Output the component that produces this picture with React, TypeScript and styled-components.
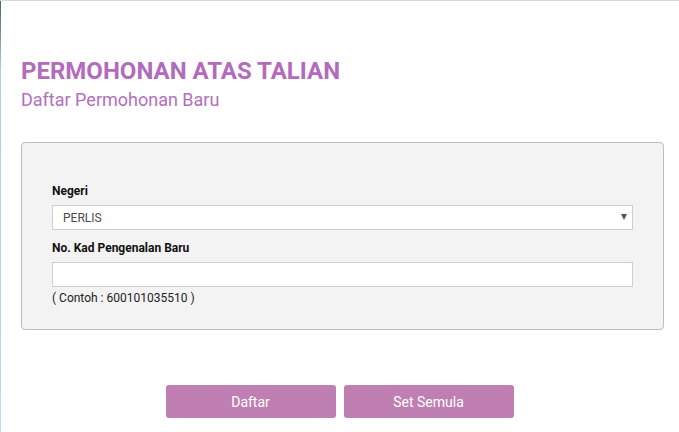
import styled, { createGlobalStyle } from 'styled-components';

const GlobalStyle = createGlobalStyle`
  html, body {
    margin: 0;
    padding: 0;
    background: #fff;
  }
  body {
    font-family: Roboto, 'Liberation Sans', sans-serif;
  }
`;

// the thin desktop strip on the left and the window line on top
const Page = styled.div`
  box-sizing: border-box;
  width: 679px;
  height: 432px;
  border-top: 1px solid #d6d6dc;
  background:
    linear-gradient(to bottom, #55606a 0, #7a8a98 30px, #a9d0f2 70px, #b8daf6 100%) left top / 1px 100% no-repeat,
    #fff;
  padding: 56px 15px 0 21px;
`;

const Title = styled.h1`
  margin: 0;
  font-size: 24px;
  font-weight: 700;
  line-height: 28px;
  color: #b36bbd;
`;

const Subtitle = styled.h2`
  margin: 4px 0 0;
  font-size: 18px;
  font-weight: 400;
  line-height: 22px;
  color: #b26fbd;
`;

const Panel = styled.form`
  box-sizing: border-box;
  margin-top: 31px;
  height: 188px;
  background: #f3f3f3;
  border: 1px solid #bdbdbd;
  border-radius: 4px;
  padding: 40px 30px 0 30px;
  display: flex;
  flex-direction: column;
`;

const Label = styled.label`
  font-size: 12px;
  font-weight: 700;
  color: #111;
  line-height: 16px;
  margin-bottom: 6px;
`;

const Field = styled.div`
  position: relative;
  margin-bottom: 10px;
`;

const Select = styled.select`
  box-sizing: border-box;
  width: 100%;
  height: 25px;
  appearance: none;
  background: #fff;
  border: 1px solid #cfcfcf;
  border-radius: 0;
  padding: 0 10px;
  font-family: Roboto, 'Liberation Sans', sans-serif;
  font-size: 12px;
  color: #4a4a4a;
  outline: none;
`;

const Caret = styled.span`
  position: absolute;
  right: 6px;
  top: 9px;
  width: 0;
  height: 0;
  border-left: 3px solid transparent;
  border-right: 3px solid transparent;
  border-top: 6px solid #555;
  pointer-events: none;
`;

const Input = styled.input`
  box-sizing: border-box;
  width: 100%;
  height: 25px;
  background: #fff;
  border: 1px solid #cbd0d8;
  padding: 0 10px;
  font-family: Roboto, 'Liberation Sans', sans-serif;
  font-size: 12px;
  outline: none;
`;

const Hint = styled.div`
  margin-top: -7px;
  font-size: 12px;
  color: #222;
  line-height: 16px;
`;

const Actions = styled.div`
  display: flex;
  justify-content: center;
  gap: 8px;
  margin-top: 55px;
  padding-right: 6px;
`;

const Button = styled.button`
  width: 170px;
  height: 33px;
  border: none;
  border-radius: 3px;
  background: #bf7fb2;
  color: #fff;
  font-family: Roboto, 'Liberation Sans', sans-serif;
  font-size: 14px;
  cursor: pointer;
`;

export default function App() {
  return (
    <>
      <GlobalStyle />
      <Page>
        <Title>PERMOHONAN ATAS TALIAN</Title>
        <Subtitle>Daftar Permohonan Baru</Subtitle>
        <Panel onSubmit={(e) => e.preventDefault()}>
          <Label>Negeri</Label>
          <Field>
            <Select defaultValue="PERLIS">
              <option>PERLIS</option>
              <option>KEDAH</option>
              <option>PULAU PINANG</option>
              <option>PERAK</option>
              <option>SELANGOR</option>
            </Select>
            <Caret />
          </Field>
          <Label>No. Kad Pengenalan Baru</Label>
          <Field>
            <Input type="text" />
          </Field>
          <Hint>( Contoh : 600101035510 )</Hint>
        </Panel>
        <Actions>
          <Button type="button">Daftar</Button>
          <Button type="button">Set Semula</Button>
        </Actions>
      </Page>
    </>
  );
}
